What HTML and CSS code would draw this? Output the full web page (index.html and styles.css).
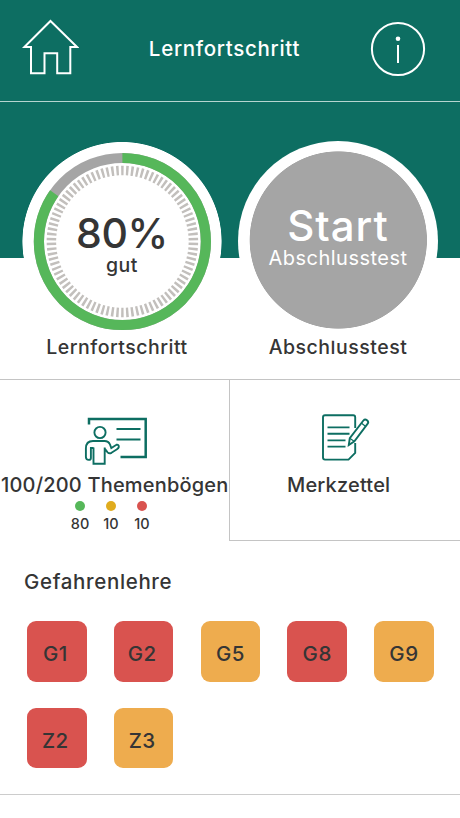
FILE: index.html
```html
<!DOCTYPE html>
<html lang="de">
<head>
  <meta charset="UTF-8" />
  <meta name="viewport" content="width=device-width, initial-scale=1.0"/>
  <title>Lernfortschritt</title>
  <link rel="stylesheet" href="styles.css">
</head>
<body>
  <div class="top">
    <header class="header">
      <svg class="home" width="58" height="58" viewBox="0 0 58 58">
        <path d="M29.5 3 L56 29 H49.3 V55.3 H36.2 V35.3 H23.5 V55.3 H10 V29 H3.4 Z" />
      </svg>
      <h1>Lernfortschritt</h1>
      <svg class="info" width="56" height="56" viewBox="0 0 56 56">
        <circle class="ring" cx="28" cy="28" r="26.1" />
        <circle class="dot" cx="28" cy="17.8" r="2.3" />
        <path d="M28 24 V42" />
      </svg>
    </header>

    <div class="circles">
      <div class="item">
        <div class="circle progress">
          <svg class="gauge" width="200" height="200" viewBox="0 0 200 200">
            <circle class="rest" cx="100.4" cy="100.5" r="83.5" />
            <circle class="done" cx="100.4" cy="100.5" r="83.5" pathLength="100" transform="rotate(-90 100.4 100.5)" />
            <circle class="ticks" cx="100.4" cy="100.5" r="71" pathLength="180" transform="rotate(-90 100.4 100.5)" />
          </svg>
          <p class="big percent">80%</p>
          <p class="small">gut</p>
        </div>
        <p class="label left">Lernfortschritt</p>
      </div>
      <div class="item">
        <div class="circle test">
          <p class="big start">Start</p>
          <p class="small">Abschlusstest</p>
        </div>
        <p class="label">Abschlusstest</p>
      </div>
    </div>
  </div>

  <div class="tabs">
    <div class="tab active">
      <svg class="icon board" width="66" height="50" viewBox="0 0 66 50">
        <path class="thick" d="M5 8.5 V3 H61.7 V41 H36.5" />
        <path d="M32.5 13 H56.5 M32.5 23.5 H56.5" />
        <circle cx="16" cy="16.5" r="5.6" />
        <path d="M9.5 31.5 V47.8 H20.7 V31.5 M9.5 32 H6.9 V42 Q6.9 43.9 4.7 43.9 Q1.9 43.9 1.9 41 V32.5 Q1.9 25 9 25 H20.5 Q24.5 25 26 28.5 L27.3 32 L32.4 28.8 Q35 28.3 34.8 31 Q34.6 32.3 33 33.3 L27.5 36.8 Q25.3 38 23.6 36.3 L20.7 32.5" />
      </svg>
      <p class="title">100/200 Themenbögen</p>
      <div class="counts">
        <div class="count"><span class="green"></span>80</div>
        <div class="count"><span class="yellow"></span>10</div>
        <div class="count"><span class="red"></span>10</div>
      </div>
    </div>
    <div class="tab">
      <svg class="icon note" width="50" height="50" viewBox="0 0 50 50">
        <path d="M35.2 16 V5.2 Q35.2 3.2 33.2 3.2 H5 Q3 3.2 3 5.2 V45.6 Q3 47.6 5 47.6 H28.5 L35.2 40.8 V31" />
        <path d="M7.5 15.4 H29.5 M7.5 21.8 H29.5 M7.5 28.4 H25.5 M7.5 34.6 H25.5" />
        <path d="M28.8 33 L29.8 26.2 L43.4 8.5 Q45 6.6 47 8.2 Q49 9.9 47.7 11.6 L34.4 29.4 Z" />
        <path class="thin" d="M41.6 11.2 L45.4 14.2 M29.8 26.2 L34.4 29.4" />
      </svg>
      <p class="title">Merkzettel</p>
    </div>
  </div>

  <section class="topics">
    <h2>Gefahrenlehre</h2>
    <div class="grid">
      <div class="box bad shift">G1</div>
      <div class="box bad shift">G2</div>
      <div class="box medium">G5</div>
      <div class="box bad">G8</div>
      <div class="box medium">G9</div>
      <div class="box bad shift">Z2</div>
      <div class="box medium shift">Z3</div>
    </div>
  </section>
</body>
</html>
```
FILE: styles.css
```css
* {
  box-sizing: border-box;
}

body {
  margin: 0;
  background-color: #fff;
  color: #353535;
  font-family: Inter, "Liberation Sans", sans-serif;
  font-weight: 500;
}

h1, h2, p {
  margin: 0;
  font-weight: 500;
  white-space: nowrap;
}

svg {
  display: block;
  fill: none;
}

.top {
  height: 379px;
  background: linear-gradient(#0d6e62 258px, #fff 258px);
}

.header {
  display: flex;
  justify-content: space-between;
  height: 102px;
  padding: 0 34px 0 21px;
  border-bottom: 1px solid #b5d5d0;
}

.header h1 {
  margin-top: 34px;
  color: #fff;
  font-size: 20.5px;
  line-height: 29px;
  letter-spacing: 0.7px;
}

.home {
  margin-top: 18px;
  stroke: #fff;
  stroke-width: 2;
}

.info {
  margin-top: 21px;
  stroke: #fff;
  stroke-width: 2;
}

.info .dot {
  fill: #fff;
  stroke: none;
}

.circles {
  display: flex;
  gap: 16px;
  padding: 39px 0 0 22px;
}

.item {
  width: 200px;
  text-align: center;
}

.circle {
  position: relative;
  height: 200px;
  padding-top: 71px;
  border-radius: 50%;
}

.progress {
  background: radial-gradient(circle at 100px 100.6px, #fff 99.2px, transparent 100px);
}

.test {
  background: radial-gradient(circle at 100.3px 99px, #a5a5a5 88.3px, #fff 89px);
  color: #fff;
}

.gauge {
  position: absolute;
  top: 0;
  left: 0;
}

.gauge circle {
  stroke-width: 10.2;
}

.rest {
  stroke: #a5a5a5;
}

.done {
  stroke: #56b75a;
  stroke-dasharray: 84.8 15.2;
}

.gauge .ticks {
  stroke: #c2bfbc;
  stroke-width: 9.5;
  stroke-dasharray: 1 1;
  stroke-dashoffset: 0.5;
}

.big {
  position: relative;
  font-size: 42px;
  line-height: 42px;
}

.small {
  position: relative;
  font-size: 19.5px;
  line-height: 22px;
  letter-spacing: 0.5px;
}

.percent {
  font-size: 41px;
  letter-spacing: -0.3px;
}

.start {
  margin-top: -7px;
  letter-spacing: 1px;
}

.test .small {
  font-weight: 400;
  font-size: 20px;
}

.label {
  margin-top: -7px;
  font-size: 19.5px;
  line-height: 26px;
  letter-spacing: 0.5px;
}

.label.left {
  padding-right: 10px;
}

.tabs {
  display: flex;
  height: 162px;
  border-top: 1px solid #c4c4c4;
}

.tab {
  width: 231px;
  border-left: 1px solid #c4c4c4;
  border-bottom: 1px solid #c4c4c4;
}

.tab.active {
  width: 229px;
  border: none;
}

.icon {
  stroke: #0d6e62;
  stroke-width: 1.9;
}

.board {
  margin: 36px 0 0 84px;
}

.board .thick {
  stroke-width: 2.5;
}

.note {
  margin: 32px 0 0 90px;
}

.note .thin {
  stroke-width: 1.2;
}

.title {
  margin-top: 6px;
  font-size: 20px;
  line-height: 26px;
  letter-spacing: 0.18px;
}

.active .title {
  padding-left: 1px;
}

.tab:not(.active) .title {
  margin-top: 10px;
  padding-left: 57px;
}

.counts {
  display: flex;
  gap: 3px;
  padding: 3px 0 0 66px;
}

.count {
  display: flex;
  flex-direction: column;
  align-items: center;
  width: 28px;
  font-size: 14.5px;
  line-height: 26px;
}

.count span {
  width: 10px;
  height: 10px;
  border-radius: 50%;
}

.green {
  background-color: #56b75a;
}

.yellow {
  background-color: #e0ac1e;
}

.red {
  background-color: #d9534f;
}

.topics {
  height: 254px;
  padding: 28px 26px 0 27px;
  border-bottom: 1px solid #ccc;
}

.topics h2 {
  margin-left: -3px;
  font-size: 20.5px;
  line-height: 26px;
  letter-spacing: 0.65px;
}

.grid {
  display: grid;
  grid-template-columns: repeat(5, 59.7px);
  gap: 26px 27.1px;
  margin-top: 26px;
}

.box {
  height: 60.5px;
  padding-top: 5px;
  border-radius: 9px;
  font-size: 20.5px;
  line-height: 55px;
  letter-spacing: 0.5px;
  text-align: center;
}

.shift {
  padding-right: 3px;
}

.bad {
  background-color: #d9534f;
}

.medium {
  background-color: #eeac4e;
}
```
